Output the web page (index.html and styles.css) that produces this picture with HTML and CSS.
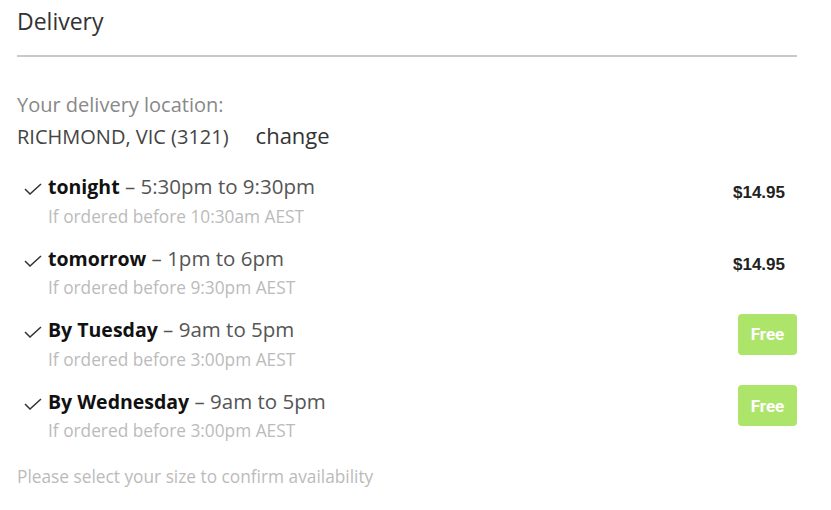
FILE: index.html
```html
<!DOCTYPE html>
<html>
<head>
<meta charset="utf-8">
<link rel="stylesheet" href="styles.css">
</head>
<body>
<div class="panel">
  <h2 class="title">Delivery</h2>
  <div class="rule"></div>
  <div class="location">
    <div class="loc-label">Your delivery location:</div>
    <div class="loc-value"><span class="suburb">RICHMOND, VIC (3121)</span><a class="change">change</a></div>
  </div>
  <ul class="options">
    <li class="option">
      <svg class="check" width="18" height="12" viewBox="0 0 18 12"><polyline points="1,6 6,11 17,1" fill="none" stroke="#333" stroke-width="1.5"/></svg>
      <div class="opt-text">
        <div class="opt-title"><b>tonight</b> – 5:30pm to 9:30pm</div>
        <div class="opt-sub">If ordered before 10:30am AEST</div>
      </div>
      <div class="price">$14.95</div>
    </li>
    <li class="option">
      <svg class="check" width="18" height="12" viewBox="0 0 18 12"><polyline points="1,6 6,11 17,1" fill="none" stroke="#333" stroke-width="1.5"/></svg>
      <div class="opt-text">
        <div class="opt-title"><b>tomorrow</b> – 1pm to 6pm</div>
        <div class="opt-sub">If ordered before 9:30pm AEST</div>
      </div>
      <div class="price">$14.95</div>
    </li>
    <li class="option">
      <svg class="check" width="18" height="12" viewBox="0 0 18 12"><polyline points="1,6 6,11 17,1" fill="none" stroke="#333" stroke-width="1.5"/></svg>
      <div class="opt-text">
        <div class="opt-title"><b>By Tuesday</b> – 9am to 5pm</div>
        <div class="opt-sub">If ordered before 3:00pm AEST</div>
      </div>
      <div class="badge">Free</div>
    </li>
    <li class="option">
      <svg class="check" width="18" height="12" viewBox="0 0 18 12"><polyline points="1,6 6,11 17,1" fill="none" stroke="#333" stroke-width="1.5"/></svg>
      <div class="opt-text">
        <div class="opt-title"><b>By Wednesday</b> – 9am to 5pm</div>
        <div class="opt-sub">If ordered before 3:00pm AEST</div>
      </div>
      <div class="badge">Free</div>
    </li>
  </ul>
  <p class="note">Please select your size to confirm availability</p>
</div>
</body>
</html>
```
FILE: styles.css
```css
html, body {
  margin: 0;
  padding: 0;
  background: #fff;
}
body {
  font-family: "Open Sans", Lato, sans-serif;
  color: #333;
}
.panel {
  width: 780px;
  padding: 0 0 0 17px;
}
.title {
  margin: 0;
  padding-top: 6px;
  font-size: 23px;
  line-height: 30px;
  font-weight: 400;
  color: #333;
}
.rule {
  margin-top: 19px;
  height: 2px;
  background: #c9c9c9;
}
.location {
  margin-top: 32px;
}
.loc-label {
  font-size: 20px;
  line-height: 31px;
  color: #888;
}
.loc-value {
  margin-top: 0;
  font-size: 20px;
  line-height: 32px;
  color: #444;
}
.change {
  margin-left: 27px;
  font-size: 22px;
  line-height: 30px;
  color: #333;
}
.options {
  list-style: none;
  margin: 19px 0 0 0;
  padding: 0;
}
.option {
  display: flex;
  align-items: flex-start;
  height: 71.5px;
}
.check {
  margin: 11px 0 0 7px;
  flex: none;
}
.opt-text {
  margin-left: 6px;
  flex: 1;
}
.opt-title {
  font-size: 20.5px;
  line-height: 28px;
  color: #555;
}
.opt-title b {
  font-size: 19.5px;
  line-height: 26px;
  color: #111;
  font-weight: 700;
}
.opt-sub {
  margin-top: 5.6px;
  font-size: 17.3px;
  line-height: 22px;
  color: #bbb;
}
.price {
  margin: 12px 12px 0 0;
  font-family: "Liberation Sans", Arial, sans-serif;
  font-weight: 700;
  font-size: 17px;
  line-height: 18px;
  color: #222;
}
.badge {
  margin-top: -1.5px;
  width: 59px;
  height: 41px;
  border-radius: 4px;
  background: #ade56b;
  color: #fff;
  font-family: Roboto, sans-serif;
  font-weight: 700;
  font-size: 17px;
  display: flex;
  align-items: center;
  justify-content: center;
}
.note {
  margin: 8.2px 0 0 0;
  font-size: 17.3px;
  line-height: 22px;
  color: #bbb;
}
```
